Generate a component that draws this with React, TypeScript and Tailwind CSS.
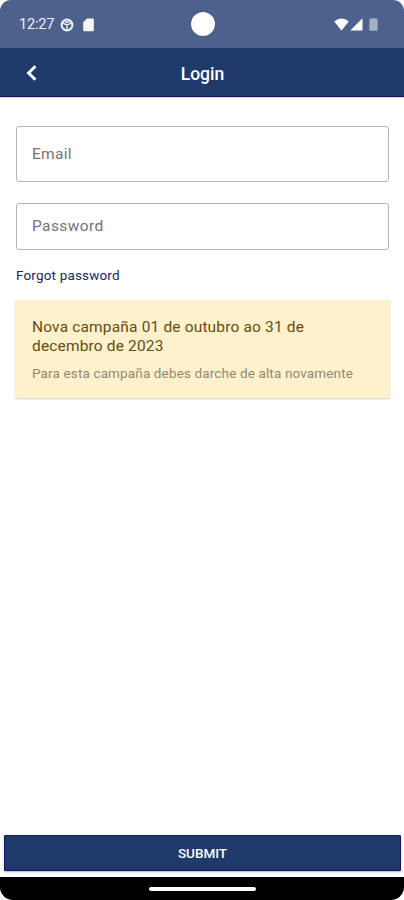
import { useState } from "react";

function StatusBar() {
  return (
    <div className="relative flex h-[48px] shrink-0 items-center justify-between bg-[#4c618b] pt-px pr-[26px] pl-[19px] text-white">
      <div className="flex items-center">
        <span className="w-[41px] pt-[2px] text-[14.5px] leading-none tracking-[-0.2px] text-[#eef1f6]">12:27</span>
        <svg className="h-[14px] w-[14px]" viewBox="0 0 14 14" fill="none" stroke="#eef1f6" aria-hidden>
          <circle cx="7" cy="7" r="5.4" strokeWidth="2" />
          <path d="M3 5.4 7 6.8l4-1.4M7 6.8V12M4.6 4h4.8" strokeWidth="1.4" />
        </svg>
        <svg className="ml-[9px] h-[14px] w-[11px]" viewBox="0 0 11 14" fill="#f6f6f8" aria-hidden>
          <path d="M4 .4h5.8q1 0 1 1v10.9q0 1-1 1H1.2q-1 0-1-1V4.2Z" />
        </svg>
      </div>
      <div className="absolute top-[12px] left-[191px] h-[24px] w-[24px] rounded-full bg-white shadow-[0_0_1px_#26324a]" />
      <div className="flex items-center">
        <svg className="h-[13px] w-[15px]" viewBox="0 0 15 13" fill="#fff" aria-hidden>
          <path d="M.2 3.5Q3.4.6 7.5.6t7.3 2.9L7.5 12.6Z" />
        </svg>
        <svg className="ml-px h-[13px] w-[13px]" viewBox="0 0 13 13" fill="#fff" aria-hidden>
          <path d="M12.5.2v12.4H.3Z" />
        </svg>
        <svg className="ml-[6px] h-[13px] w-[9px]" viewBox="0 0 9 13" fill="#a6afc4" aria-hidden>
          <path d="M.4.8h2.3V.2h3.6v.6h2.3v11.9H.4Z" />
        </svg>
      </div>
    </div>
  );
}

function Field({
  label,
  type,
  className,
}: {
  label: string;
  type: string;
  className: string;
}) {
  const [value, setValue] = useState("");

  return (
    <label className={`relative flex items-center rounded-[3px] border border-[#b4b4b4] pl-[15px] ${className}`}>
      {value ? null : <span className="text-[15.5px] leading-5 text-[#747474]">{label}</span>}
      <input
        type={type}
        value={value}
        onChange={(e) => setValue(e.target.value)}
        aria-label={label}
        className="absolute inset-0 bg-transparent px-[15px] text-[15.5px] text-[#333] outline-none"
      />
    </label>
  );
}

export default function App() {
  return (
    <div className="h-[900px] w-full overflow-hidden bg-white font-['Roboto','Liberation_Sans',sans-serif]">
      <div className="flex h-full flex-col overflow-hidden rounded-t-[11px] rounded-b-[13px] bg-white">
        <StatusBar />

        <header className="grid h-[49px] shrink-0 grid-cols-[1fr_auto_1fr] items-center border-b border-[#11145c] bg-[#1f396a] text-white shadow-[0_1px_1px_#dcdce8]">
          <button type="button" aria-label="Back" className="ml-[25px] w-[14px] pt-px">
            <svg className="h-[18px] w-[14px]" viewBox="0 0 14 18" fill="none" stroke="#fff" strokeWidth="3" aria-hidden>
              <path d="M10.4 2.2 3.6 9l6.8 6.8" />
            </svg>
          </button>
          <h1 className="pt-[3px] pl-px text-[17.5px] leading-5 font-medium">Login</h1>
        </header>

        <main className="flex flex-1 flex-col pt-[29px] pr-[14px] pl-[15px]">
          <Field label="Email" type="email" className="mx-px h-[56px] tracking-[0.3px]" />
          <Field label="Password" type="password" className="mx-px mt-[21px] h-[47px] pb-[2px] tracking-[0.4px]" />

          <a href="#" className="mt-[16px] ml-px self-start text-[13.5px] leading-[18px] tracking-[0.16px] text-[#22265f]">
            Forgot password
          </a>

          <section className="mt-[16px] h-[98px] rounded-[1px] bg-[#fff1cb] px-[17px] pt-[18px] shadow-[0_1px_2px_rgba(0,0,0,0.2)]">
            <h2 className="text-[15.5px] leading-[18.5px] tracking-[0.16px] text-[#674b10]">
              Nova campaña 01 de outubro ao 31 de
              <br />
              decembro de 2023
            </h2>
            <p className="mt-[9px] text-[13.5px] leading-[18px] tracking-[0.14px] whitespace-nowrap text-[#918874]">
              Para esta campaña debes darche de alta novamente
            </p>
          </section>
        </main>

        <div className="shrink-0 pr-[3px] pb-[6px] pl-[4px]">
          <button
            type="button"
            className="h-[36px] w-full rounded-[1px] border border-[#11195a] bg-[#1f396a] pt-px text-[13.5px] font-medium text-white shadow-[0_1px_2px_rgba(0,0,0,0.3)]"
          >
            SUBMIT
          </button>
        </div>

        <div className="flex h-[23px] shrink-0 items-center justify-center bg-black">
          <div className="h-[4px] w-[107px] rounded-full bg-white" />
        </div>
      </div>
    </div>
  );
}
